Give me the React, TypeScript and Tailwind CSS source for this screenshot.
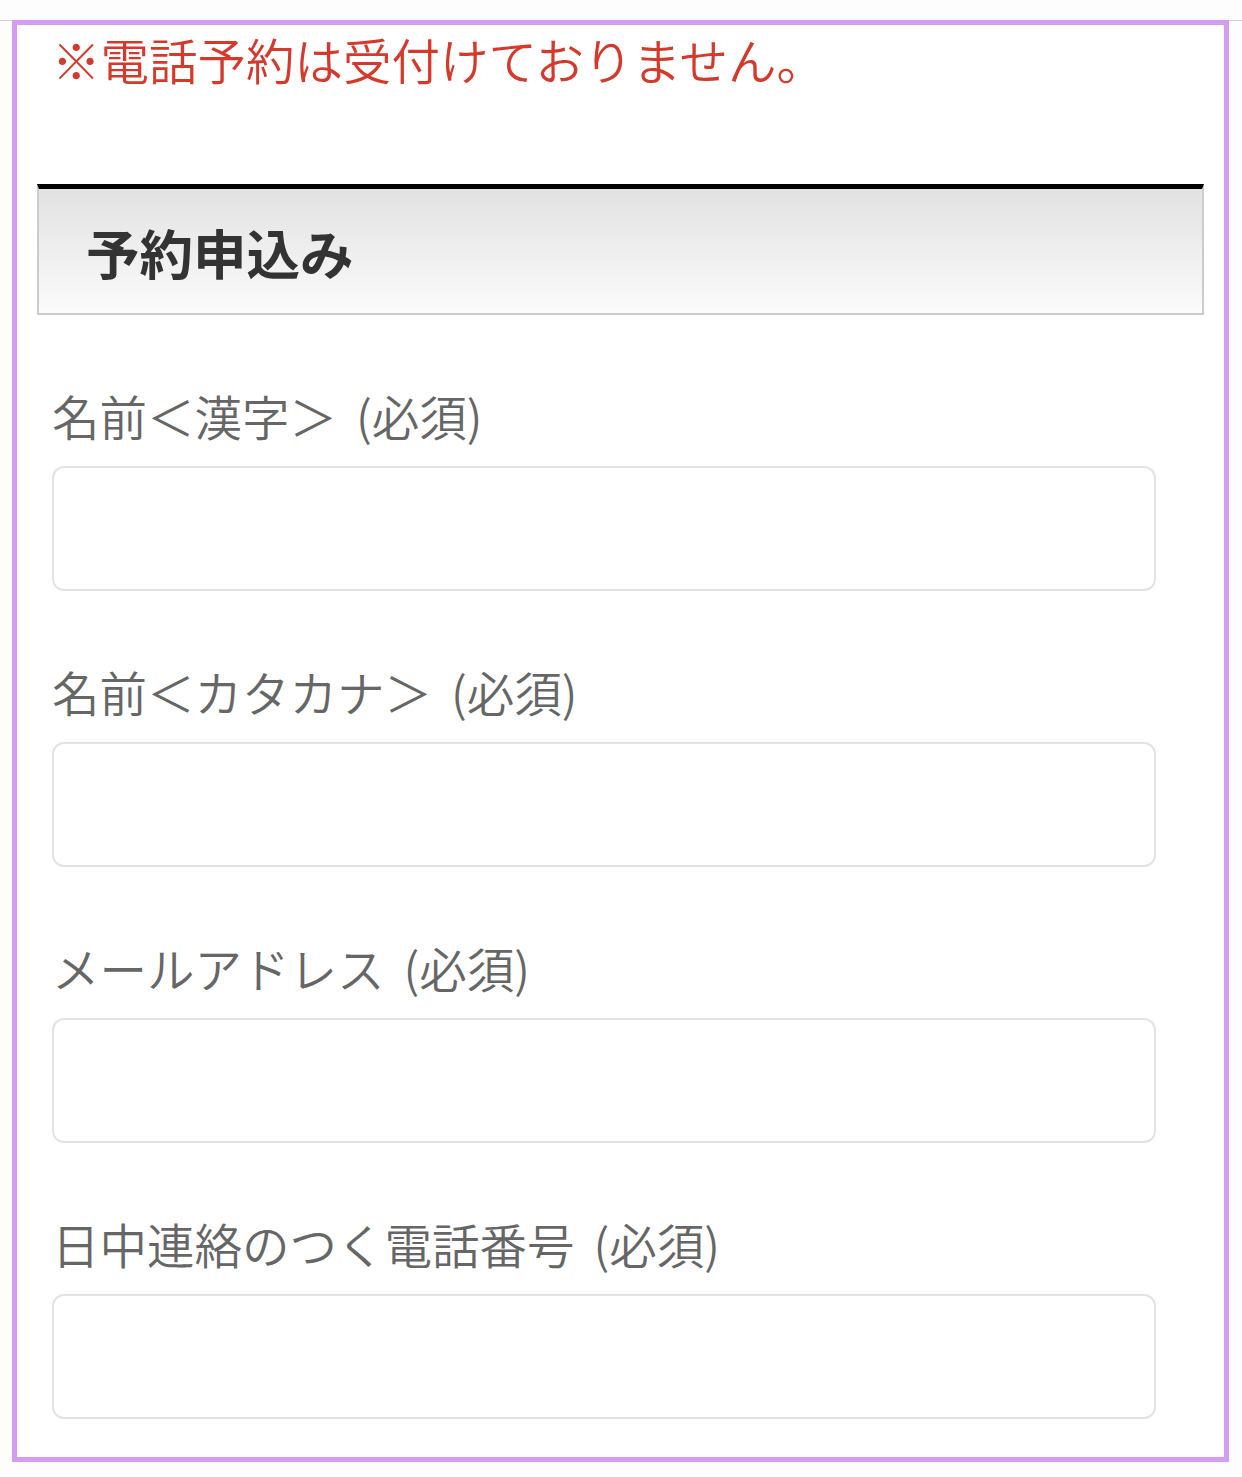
import React from 'react';

const fields = [
  '名前＜漢字＞',
  '名前＜カタカナ＞',
  'メールアドレス',
  '日中連絡のつく電話番号',
];

const App: React.FC = () => {
  return (
    <div
      className="w-[1242px] h-[1477px] bg-[#fdfdfd] pt-[20px]"
      style={{ fontFamily: '"Noto Sans CJK JP", "Noto Sans", sans-serif' }}
    >
      <div className="h-0 border-t border-[#cfcfcf]" />
      <div className="-mt-[1px] ml-[12px] w-[1217px] h-[1442px] border-[5px] border-[#d69cf0] bg-white">
        {/* 注意書き */}
        <p className="pt-[5px] px-[35px] text-[48.5px] leading-[58px] font-[350] text-[#d33a2c] whitespace-nowrap">
          ※電話予約は受付けておりません。
        </p>

        {/* 見出し */}
        <div className="mt-[96px] ml-[20px] w-[1167px] h-[131px] border-t-[5px] border-x-2 border-b-2 border-t-black border-x-[#cccccc] border-b-[#cccccc] bg-gradient-to-b from-[#e2e2e2] to-[#fbfbfb]">
          <div className="h-full flex items-center pt-[2px] pl-[47px]">
            <h2 className="text-[53.5px] leading-[56px] font-bold text-[#333333]">予約申込み</h2>
          </div>
        </div>

        {/* フォーム */}
        <div className="px-[35px] flex flex-col gap-[73px] mt-[73px]">
          {fields.map((label) => (
            <div key={label} className="flex flex-col">
              <label className="text-[47.5px] leading-[56px] font-[350] text-[#666666] whitespace-nowrap">
                {label}
                <span className="ml-[19px]">(必須)</span>
              </label>
              <input
                type="text"
                className="mt-[22px] w-[1104px] h-[125px] rounded-[12px] border-2 border-[#e3e3e3] bg-white outline-none"
              />
            </div>
          ))}
        </div>
      </div>
    </div>
  );
};

export default App;
